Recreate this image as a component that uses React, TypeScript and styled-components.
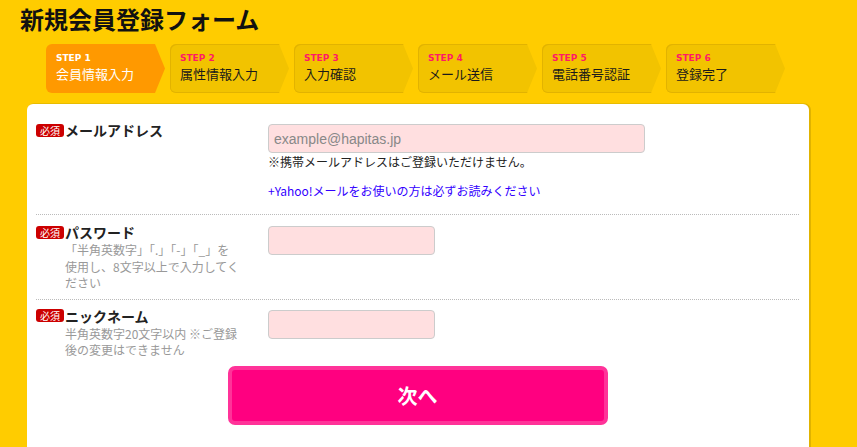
import React from "react";
import styled, { createGlobalStyle } from "styled-components";

const GlobalStyle = createGlobalStyle`
  html, body {
    margin: 0;
    padding: 0;
    background: #ffcc00;
  }
  body {
    font-family: "Noto Sans CJK JP", "Liberation Sans", sans-serif;
    color: #333;
  }
  * {
    box-sizing: border-box;
  }
`;

const Page = styled.div`
  width: 857px;
  height: 447px;
  overflow: hidden;
  background: #ffcc00;
  padding: 4px 0 0 20px;
`;

const Title = styled.h1`
  margin: 0;
  font-size: 24px;
  line-height: 30px;
  font-weight: 700;
  color: #111;
`;

const Steps = styled.ol`
  display: flex;
  gap: 5px;
  list-style: none;
  margin: 10px 0 0 26px;
  padding: 0;
`;

const Step = styled.li<{ $active?: boolean }>`
  width: 119px;
  height: 49px;
  padding: 8px 0 0 10px;
  border-radius: 6px 0 0 6px;
  background: ${(p) => (p.$active ? "#ff9900" : "#f2c300")};
  clip-path: polygon(0 0, calc(100% - 10px) 0, 100% 50%, calc(100% - 10px) 100%, 0 100%);
  box-shadow: ${(p) => (p.$active ? "none" : "inset 1px 1px 0 #e2b300, inset 0 -1px 0 #e2b300")};
`;

const StepNo = styled.div<{ $active?: boolean }>`
  font-family: "DejaVu Sans", sans-serif;
  font-size: 9px;
  line-height: 12px;
  font-weight: 700;
  color: ${(p) => (p.$active ? "#fff" : "#ff1a66")};
`;

const StepName = styled.div<{ $active?: boolean }>`
  font-size: 13px;
  line-height: 18px;
  margin-top: 1px;
  color: ${(p) => (p.$active ? "#fff" : "#1a1a1a")};
`;

const Panel = styled.div`
  margin: 11px 0 0 7px;
  width: 782px;
  height: 400px;
  background: #fff;
  border-radius: 6px 6px 0 0;
  box-shadow: 2px 0 0 #e0b300, 1px -1px 0 #e8bc00;
  padding: 9px 10px 0 9px;
`;

const Row = styled.div<{ $last?: boolean }>`
  display: flex;
  padding: ${(p) => (p.$last ? "10px 0 0" : "11px 0 7px")};
  border-bottom: ${(p) => (p.$last ? "none" : "1px dotted #bbb")};
`;

const LabelCol = styled.div`
  width: 232px;
  flex: none;
`;

const LabelLine = styled.div`
  display: flex;
  align-items: center;
  height: 14px;
  margin-top: -1px;
`;

const Badge = styled.span`
  display: inline-flex;
  align-items: center;
  justify-content: center;
  width: 28px;
  height: 13px;
  background: #cc0000;
  color: #fff;
  font-size: 10px;
  border-radius: 3px;
  margin-right: 1px;
`;

const Label = styled.span`
  font-size: 14px;
  font-weight: 700;
  color: #222;
`;

const Hint = styled.div`
  width: 176px;
  margin: 3px 0 0 29px;
  font-size: 12px;
  line-height: 16.5px;
  color: #999;
`;

const FieldCol = styled.div`
  flex: 1;
`;

const Input = styled.input<{ $wide?: boolean }>`
  display: block;
  width: ${(p) => (p.$wide ? "377px" : "167px")};
  height: 29px;
  margin: 0;
  padding: 0 5px;
  background: #ffdfe0;
  border: 1px solid #cccccc;
  border-radius: 4px;
  font-family: "Liberation Sans", "Noto Sans CJK JP", sans-serif;
  font-size: 14px;
  color: #333;
  outline: none;
  &::placeholder {
    color: #888;
  }
`;

const Note = styled.div`
  font-size: 12px;
  line-height: 17px;
  color: #222;
`;

const YahooLink = styled.a`
  display: block;
  font-size: 12px;
  line-height: 17px;
  margin: 12px 0 8px;
  color: #3300ff;
  text-decoration: none;
`;

const ButtonWrap = styled.div`
  display: flex;
  justify-content: center;
  margin-top: 7px;
`;

const NextButton = styled.button`
  width: 380px;
  height: 59px;
  background: #ff0080;
  border: 4px solid #ff3399;
  border-radius: 7px;
  color: #fff;
  font-family: "Noto Sans CJK JP", sans-serif;
  font-size: 20px;
  font-weight: 700;
  cursor: pointer;
`;

const steps = ["会員情報入力", "属性情報入力", "入力確認", "メール送信", "電話番号認証", "登録完了"];

export default function App() {
  return (
    <Page>
      <GlobalStyle />
      <Title>新規会員登録フォーム</Title>
      <Steps>
        {steps.map((name, i) => (
          <Step key={name} $active={i === 0}>
            <StepNo $active={i === 0}>STEP {i + 1}</StepNo>
            <StepName $active={i === 0}>{name}</StepName>
          </Step>
        ))}
      </Steps>
      <Panel>
        <Row>
          <LabelCol>
            <LabelLine>
              <Badge>必須</Badge>
              <Label>メールアドレス</Label>
            </LabelLine>
          </LabelCol>
          <FieldCol>
            <Input $wide placeholder="example@hapitas.jp" />
            <Note>※携帯メールアドレスはご登録いただけません。</Note>
            <YahooLink href="#">+Yahoo!メールをお使いの方は必ずお読みください</YahooLink>
          </FieldCol>
        </Row>
        <Row>
          <LabelCol>
            <LabelLine>
              <Badge>必須</Badge>
              <Label>パスワード</Label>
            </LabelLine>
            <Hint>「半角英数字」「.」「-」「_」を使用し、8文字以上で入力してください</Hint>
          </LabelCol>
          <FieldCol>
            <Input type="password" />
          </FieldCol>
        </Row>
        <Row $last>
          <LabelCol>
            <LabelLine>
              <Badge>必須</Badge>
              <Label>ニックネーム</Label>
            </LabelLine>
            <Hint>半角英数字20文字以内 ※ご登録後の変更はできません</Hint>
          </LabelCol>
          <FieldCol>
            <Input />
          </FieldCol>
        </Row>
        <ButtonWrap>
          <NextButton>次へ</NextButton>
        </ButtonWrap>
      </Panel>
    </Page>
  );
}
